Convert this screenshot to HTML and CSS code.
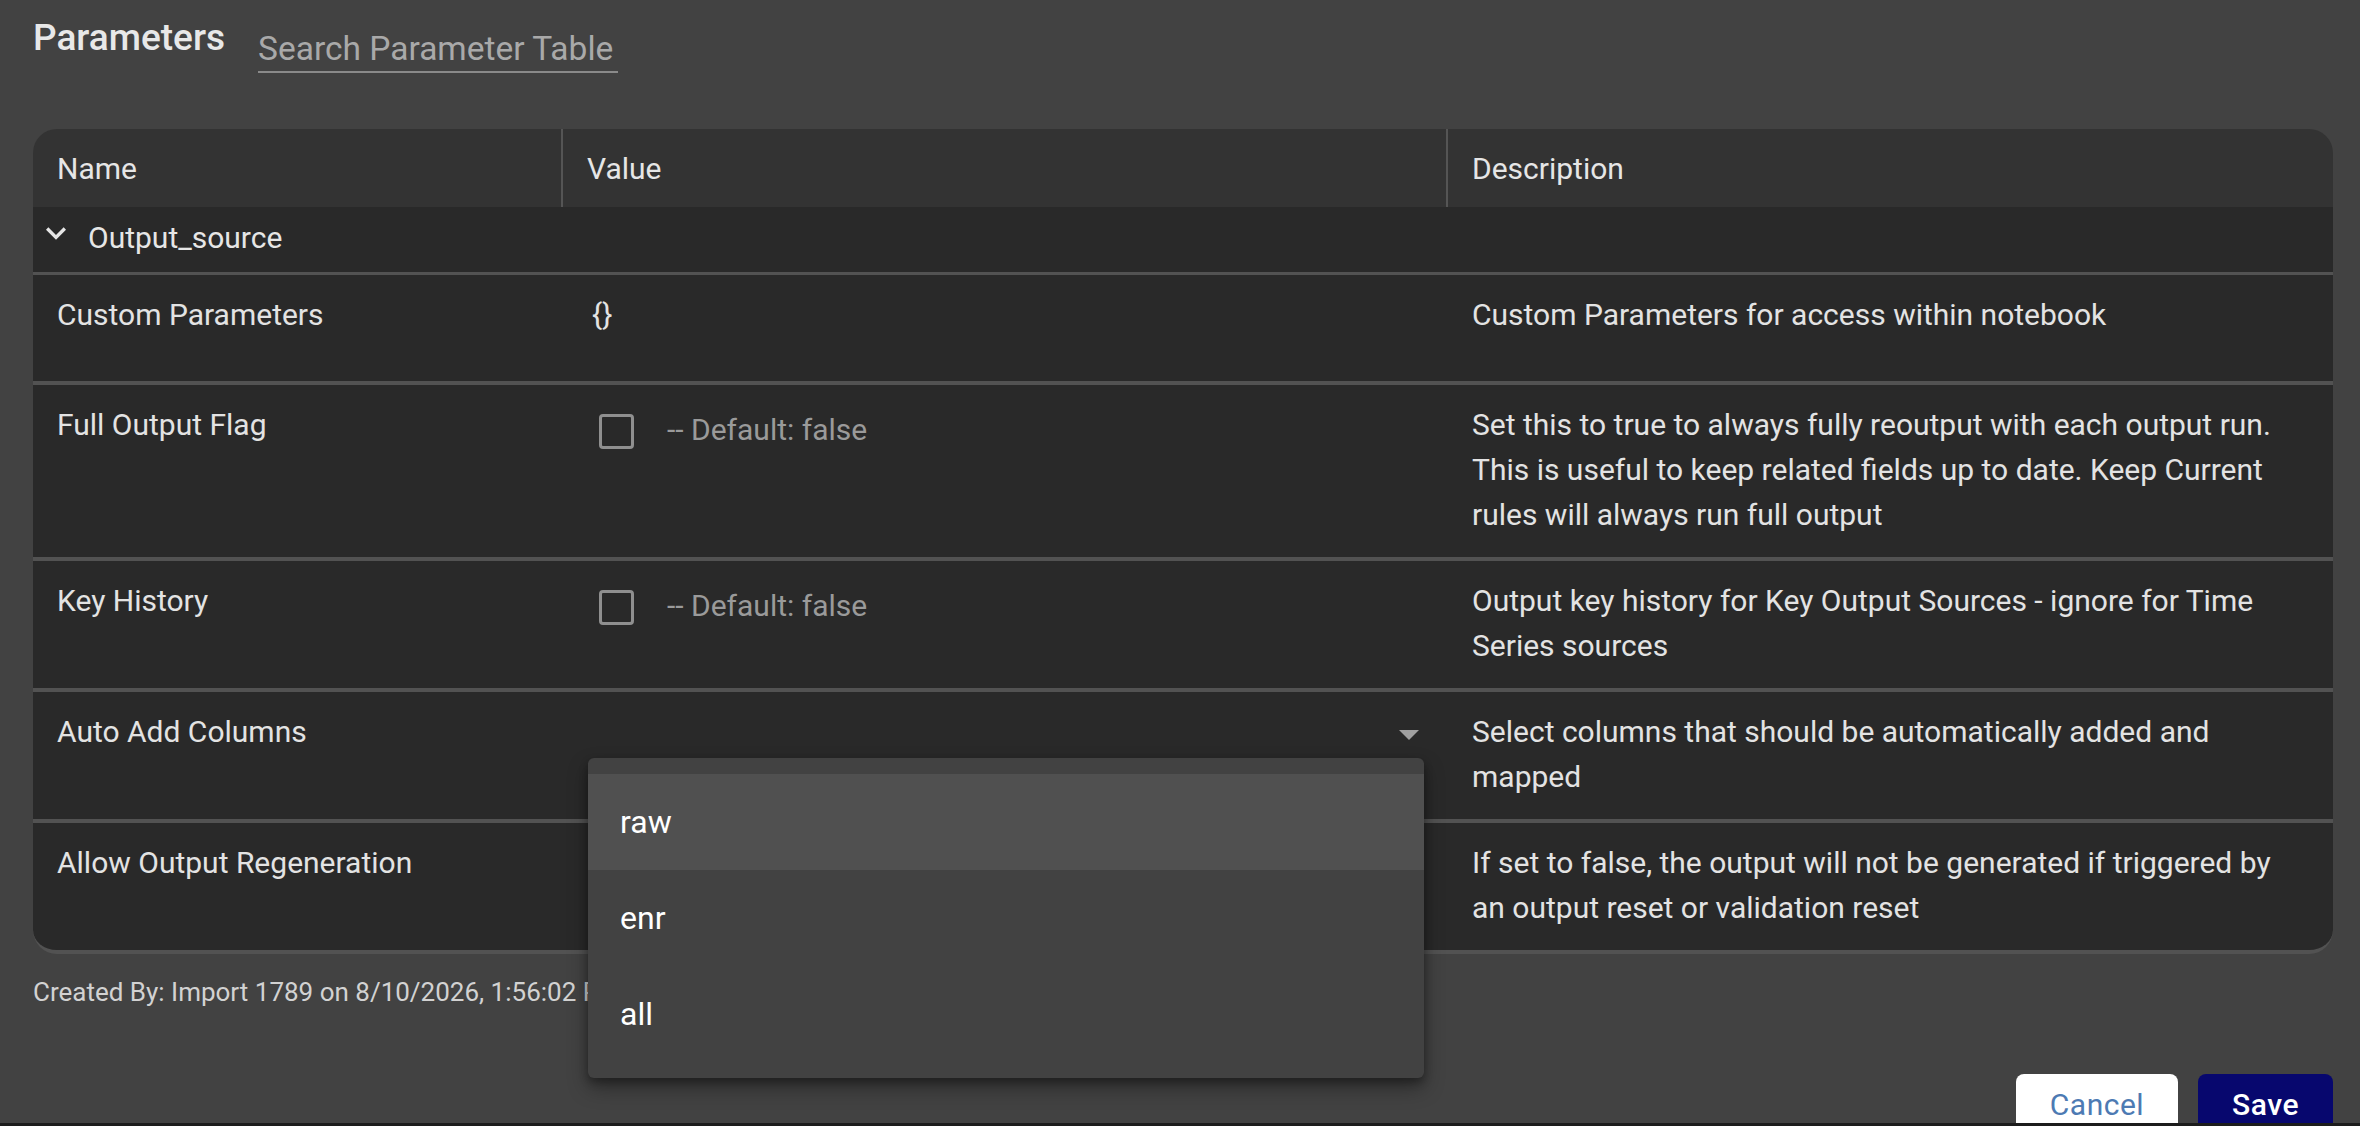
FILE: index.html
```html
<!DOCTYPE html>
<html lang="en">
<head>
    <meta charset="UTF-8">
    <meta name="viewport" content="width=device-width, initial-scale=1.0">
    <title>Parameters</title>
    <link rel="stylesheet" href="styles.css">
</head>
<body>
    <div class="dialog">
        <div class="dialog-head">
            <h2 class="dialog-title">Parameters</h2>
            <input class="search" type="text" placeholder="Search Parameter Table">
        </div>

        <div class="param-table">
            <div class="table-head">
                <div class="th">Name</div>
                <div class="th">Value</div>
                <div class="th">Description</div>
            </div>

            <!-- group: Output_source -->
            <div class="group-row">
                <svg class="group-icon" viewBox="0 0 24 24" width="40" height="40">
                    <path d="M16.59 8.59 12 13.17 7.41 8.59 6 10l6 6 6-6z" fill="#e6e6e6"/>
                </svg>
                <span>Output_source</span>
            </div>

            <div class="row">
                <div class="cell name-cell">Custom Parameters</div>
                <div class="cell value-cell"><div class="json-value">{}</div></div>
                <div class="cell desc-cell">Custom Parameters for access within notebook</div>
            </div>

            <div class="row">
                <div class="cell name-cell">Full Output Flag</div>
                <div class="cell value-cell">
                    <div class="check-field">
                        <span class="checkbox"></span>
                        <span class="default-hint">-- Default: false</span>
                    </div>
                </div>
                <div class="cell desc-cell">Set this to true to always fully reoutput with each output run. This is useful to keep related fields up to date. Keep Current rules will always run full output</div>
            </div>

            <div class="row">
                <div class="cell name-cell">Key History</div>
                <div class="cell value-cell">
                    <div class="check-field">
                        <span class="checkbox"></span>
                        <span class="default-hint">-- Default: false</span>
                    </div>
                </div>
                <div class="cell desc-cell">Output key history for Key Output Sources - ignore for Time Series sources</div>
            </div>

            <div class="row">
                <div class="cell name-cell">Auto Add Columns</div>
                <div class="cell value-cell">
                    <div class="select-field">
                        <svg class="select-arrow" viewBox="0 0 20 10" width="20" height="10">
                            <path d="M0 0h20L10 10z" fill="#a0a0a0"/>
                        </svg>
                        <!-- open dropdown menu -->
                        <ul class="menu">
                            <li class="menu-item active">raw</li>
                            <li class="menu-item">enr</li>
                            <li class="menu-item">all</li>
                        </ul>
                    </div>
                </div>
                <div class="cell desc-cell">Select columns that should be automatically added and mapped</div>
            </div>

            <div class="row last-row">
                <div class="cell name-cell">Allow Output Regeneration</div>
                <div class="cell value-cell"></div>
                <div class="cell desc-cell">If set to false, the output will not be generated if triggered by an output reset or validation reset</div>
            </div>
        </div>

        <p class="created">Created By: Import 1789 on 8/10/2026, 1:56:02 PM</p>

        <div class="actions">
            <button class="btn btn-cancel">Cancel</button>
            <button class="btn btn-save">Save</button>
        </div>
    </div>
</body>
</html>
```

FILE: styles.css
```css
body {
    margin: 0;
    padding: 0;
    background-color: #1c1c1c;
    font-family: Roboto, "Liberation Sans", sans-serif;
}
.dialog {
    height: 1123px;
    box-sizing: border-box;
    padding: 16px 27px 0 33px;
    background-color: #424242;
    color: #e3e3e3;
    overflow: hidden;
}
.dialog-head {
    display: flex;
    align-items: flex-start;
    gap: 33px;
}
.dialog-title {
    margin: 0;
    font-size: 37px;
    font-weight: 500;
    line-height: 43px;
    color: #e8e8e8;
}
.search {
    margin-top: 13px;
    width: 360px;
    height: 40px;
    padding: 0 0 2px;
    border: 0;
    border-bottom: 2px solid #8a8a8a;
    background: transparent;
    font-family: Roboto, "Liberation Sans", sans-serif;
    font-size: 33.5px;
    line-height: 40px;
    color: #e3e3e3;
    outline: none;
}
.search::placeholder {
    color: #a9a9a9;
    opacity: 1;
}

/* table */
.param-table {
    margin-top: 56px;
}
.table-head,
.row {
    display: grid;
    grid-template-columns: 528px 885px 1fr;
}
.table-head {
    height: 78px;
    background-color: #333333;
    border-radius: 24px 24px 0 0;
}
.th {
    display: flex;
    align-items: center;
    padding-left: 24px;
    font-size: 30px;
    line-height: 45px;
    color: #e6e6e6;
}
.th + .th {
    border-left: 2px solid #555555;
}
.group-row {
    display: flex;
    align-items: flex-start;
    gap: 12px;
    height: 57px;
    padding: 8px 0 0 3px;
    background-color: #292929;
    border-bottom: 3px solid #525252;
    font-size: 30px;
    line-height: 45px;
    color: #e6e6e6;
}
.group-icon {
    margin-top: -2px;
}
.row {
    background-color: #292929;
    border-bottom: 4px solid #525252;
}
.last-row {
    border-radius: 0 0 24px 24px;
}
.cell {
    padding: 17px 24px 20px;
    font-size: 30px;
    line-height: 45px;
    color: #e3e3e3;
}
.value-cell {
    padding-left: 26px;
}
.desc-cell {
    padding-left: 26px;
}
.json-value {
    margin-left: 5px;
    height: 69px;
}
.check-field {
    display: flex;
    align-items: center;
    gap: 33px;
    height: 47px;
    margin: 6px 0 0 12px;
}
.checkbox {
    width: 35px;
    height: 35px;
    box-sizing: border-box;
    border: 3px solid #8f8f8f;
    border-radius: 4px;
}
.default-hint {
    margin-top: -5px;
    color: #9a9a9a;
}
.select-field {
    position: relative;
    display: flex;
    justify-content: flex-end;
    align-items: center;
    height: 51px;
    margin: 0 -2px 0 1px;
    padding-right: 5px;
}
.menu {
    position: absolute;
    top: 49px;
    left: 0;
    width: 100%;
    margin: 0;
    padding: 16px 0;
    list-style: none;
    background-color: #424242;
    border-radius: 6px;
    box-shadow: 0 10px 20px rgba(0, 0, 0, 0.35), 0 4px 8px rgba(0, 0, 0, 0.3);
    z-index: 10;
}
.menu-item {
    height: 96px;
    padding-left: 32px;
    font-size: 32px;
    line-height: 96px;
    color: #ffffff;
}
.menu-item.active {
    background-color: #505050;
}

.created {
    margin: 20px 0 0;
    font-size: 26px;
    line-height: 37.5px;
    color: #d2d2d2;
}
.actions {
    display: flex;
    justify-content: flex-end;
    gap: 20px;
    margin-top: 62px;
}
.btn {
    height: 62px;
    padding: 0 34px;
    border: 0;
    border-radius: 8px;
    font-family: Roboto, "Liberation Sans", sans-serif;
    font-size: 30px;
    letter-spacing: 0.5px;
    cursor: pointer;
}
.btn-cancel {
    background-color: #ffffff;
    color: #4d7ab3;
}
.btn-save {
    background-color: #07076e;
    color: #ffffff;
    font-weight: 500;
}
```
